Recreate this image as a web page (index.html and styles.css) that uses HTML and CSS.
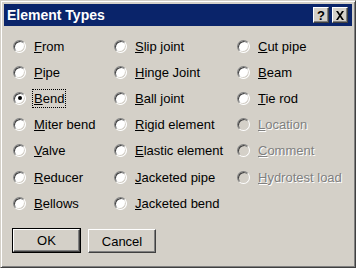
FILE: index.html
```html
<!DOCTYPE html>
<html>
	<head>
		<meta charset="utf-8">
		<title>Element Types</title>
		<link rel="stylesheet" href="styles.css">
	</head>
	<body>
		<div class="window">
			<div class="titlebar">
				<span class="title">Element Types</span>
				<span class="tbtn">?</span>
				<span class="tbtn close">
					<svg width="10" height="9" viewBox="0 0 10 9"><path d="M1 0h2l2 3 2-3h2L6 4.5 9 9H7L5 6 3 9H1l3-4.5z" fill="#000"/></svg>
				</span>
			</div>
			<div class="options">
				<div class="col col1">
					<label class="opt"><span class="radio"></span><span class="txt"><u>F</u>rom</span></label>
					<label class="opt"><span class="radio"></span><span class="txt"><u>P</u>ipe</span></label>
					<label class="opt"><span class="radio on"></span><span class="txt focus"><u>B</u>end</span></label>
					<label class="opt"><span class="radio"></span><span class="txt"><u>M</u>iter bend</span></label>
					<label class="opt"><span class="radio"></span><span class="txt"><u>V</u>alve</span></label>
					<label class="opt"><span class="radio"></span><span class="txt"><u>R</u>educer</span></label>
					<label class="opt"><span class="radio"></span><span class="txt"><u>B</u>ellows</span></label>
				</div>
				<div class="col col2">
					<label class="opt"><span class="radio"></span><span class="txt"><u>S</u>lip joint</span></label>
					<label class="opt"><span class="radio"></span><span class="txt"><u>H</u>inge Joint</span></label>
					<label class="opt"><span class="radio"></span><span class="txt"><u>B</u>all joint</span></label>
					<label class="opt"><span class="radio"></span><span class="txt"><u>R</u>igid element</span></label>
					<label class="opt"><span class="radio"></span><span class="txt"><u>E</u>lastic element</span></label>
					<label class="opt"><span class="radio"></span><span class="txt"><u>J</u>acketed pipe</span></label>
					<label class="opt"><span class="radio"></span><span class="txt"><u>J</u>acketed bend</span></label>
				</div>
				<div class="col col3">
					<label class="opt"><span class="radio"></span><span class="txt"><u>C</u>ut pipe</span></label>
					<label class="opt"><span class="radio"></span><span class="txt"><u>B</u>eam</span></label>
					<label class="opt"><span class="radio"></span><span class="txt"><u>T</u>ie rod</span></label>
					<label class="opt off"><span class="radio"></span><span class="txt"><u>L</u>ocation</span></label>
					<label class="opt off"><span class="radio"></span><span class="txt"><u>C</u>omment</span></label>
					<label class="opt off"><span class="radio"></span><span class="txt"><u>H</u>ydrotest load</span></label>
				</div>
			</div>
			<div class="buttons">
				<span class="btn default"><span class="face">OK</span></span>
				<span class="btn"><span class="face">Cancel</span></span>
			</div>
		</div>
	</body>
</html>
```
FILE: styles.css
```css
*{
	margin:0;
	padding:0;
	box-sizing:border-box;
}
body{
	width:356px;
	height:268px;
	overflow:hidden;
	background:#d4d0c8;
	font-family:"Liberation Sans", Arial, sans-serif;
	font-size:13px;
	color:#000;
}
.window{
	width:356px;
	height:268px;
	background:#d4d0c8;
	border:1px solid;
	border-color:#d4d0c8 #404040 #404040 #d4d0c8;
	box-shadow:inset 1px 1px #fff, inset -1px -1px #808080;
	padding:3px;
}
.titlebar{
	height:22px;
	background:#0a246a;
	display:flex;
	align-items:center;
	padding:0 4px 0 3px;
	gap:2px;
}
.title{
	flex:1;
	color:#fff;
	font-weight:bold;
	font-size:14px;
}
.tbtn{
	width:16px;
	height:16px;
	background:#d4d0c8;
	border:1px solid;
	border-color:#fff #404040 #404040 #fff;
	box-shadow:inset -1px -1px #808080;
	display:flex;
	align-items:center;
	justify-content:center;
	font-weight:bold;
	font-size:13px;
	line-height:1;
}
.tbtn.close{
	margin-left:1px;
}
.options{
	display:flex;
	padding:7px 0 0 9px;
}
.col{
	display:flex;
	flex-direction:column;
}
.col1{
	width:101px;
}
.col2{
	width:123px;
}
.opt{
	height:26.2px;
	display:flex;
	align-items:center;
	gap:6px;
}
.radio{
	width:13px;
	height:13px;
	border-radius:50%;
	background:#fff;
	border:1px solid;
	border-color:#808080 #fff #fff #808080;
	box-shadow:inset 1px 1px #404040, inset -1px -1px #d4d0c8;
	display:flex;
	align-items:center;
	justify-content:center;
}
.radio.on::after{
	content:"";
	width:4px;
	height:4px;
	border-radius:50%;
	background:#000;
}
.txt{
	padding:1px;
	border:1px solid transparent;
	line-height:15px;
}
.txt.focus{
	border:1px dotted #000;
}
.off .radio{
	background:#d4d0c8;
}
.off .txt{
	color:#808080;
	text-shadow:1px 1px #fff;
}
.buttons{
	display:flex;
	gap:7px;
	padding:13px 0 0 8px;
}
.btn{
	width:68px;
	height:24px;
	border:1px solid;
	border-color:#fff #404040 #404040 #fff;
	box-shadow:inset -1px -1px #808080;
	display:flex;
}
.btn.default{
	border:1px solid #000;
	box-shadow:none;
	width:69px;
	height:25px;
	margin-top:-1px;
}
.btn .face{
	flex:1;
	display:flex;
	align-items:center;
	justify-content:center;
}
.btn.default .face{
	border:1px solid;
	border-color:#fff #404040 #404040 #fff;
	box-shadow:inset -1px -1px #808080;
}
```
